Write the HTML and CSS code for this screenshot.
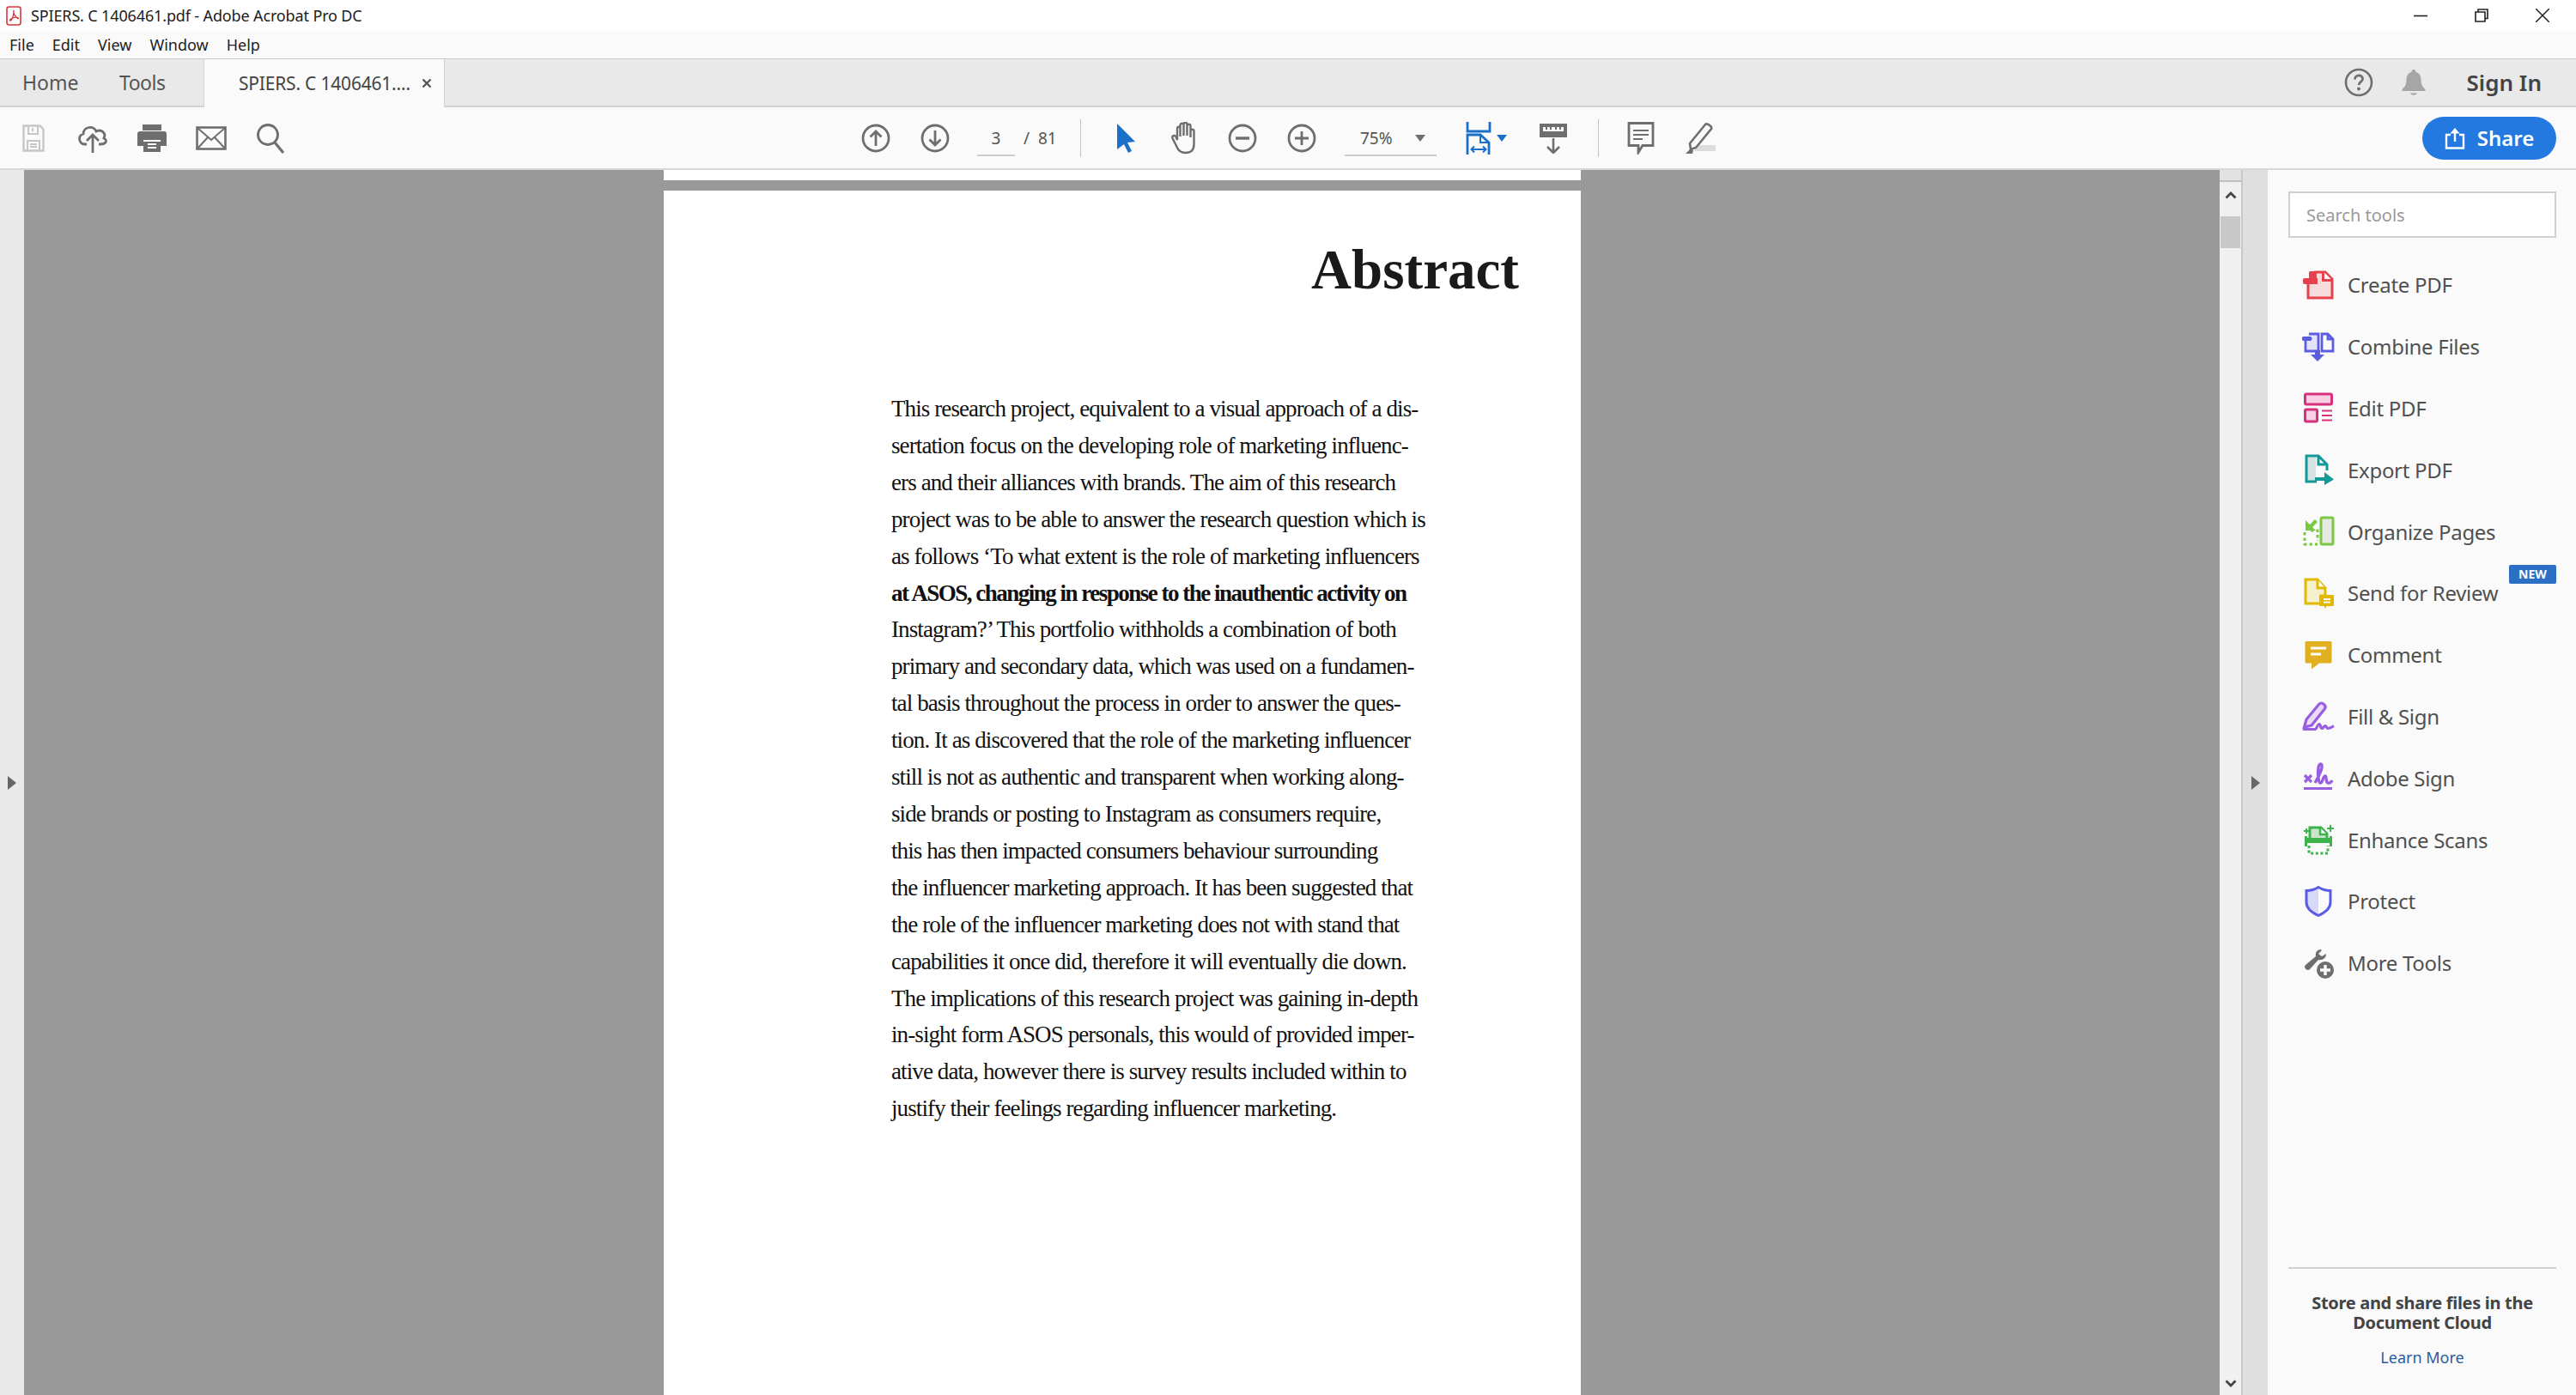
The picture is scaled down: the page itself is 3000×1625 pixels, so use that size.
FILE: index.html
```html
<!DOCTYPE html>
<html lang="en">
<head>
  <meta charset="UTF-8">
  <title>SPIERS. C 1406461.pdf - Adobe Acrobat Pro DC</title>
  <link rel="stylesheet" href="styles.css">
</head>
<body>
  <div class="app">
    <div class="titlebar">
      <svg class="app-icon" width="18" height="23" viewBox="0 0 18 23"><rect x="1" y="1" width="16" height="21" rx="2.5" fill="#fff" stroke="#d9363e" stroke-width="1.6"/><path d="M9 5c-1 3 1 6 4 9 1 1 2 .5 1-.3-2-1-7-.6-9 2-1 1.500 .3 2 1 .8 1.500-2 3-6 3-11z" fill="none" stroke="#d9363e" stroke-width="1.3"/></svg>
      <span class="title-text">SPIERS. C 1406461.pdf - Adobe Acrobat Pro DC</span>
      <div class="win-btns">
        <svg width="16" height="16" viewBox="0 0 16 16"><path d="M0 8.500h16" stroke="#222" stroke-width="1.600"/></svg>
        <svg width="16" height="16" viewBox="0 0 16 16"><path d="M4 3.500V1h11v10.500h-3M1 4h11v11H1z" fill="none" stroke="#222" stroke-width="1.600"/></svg>
        <svg width="16" height="16" viewBox="0 0 16 16"><path d="M0 0l16 16M16 0L0 16" stroke="#222" stroke-width="1.500"/></svg>
      </div>
    </div>

    <div class="menubar">
      <span>File</span><span>Edit</span><span>View</span><span>Window</span><span>Help</span>
    </div>

    <div class="tabbar">
      <div class="tab-link tab-home">Home</div>
      <div class="tab-link tab-tools">Tools</div>
      <div class="tab-doc">
        <span>SPIERS. C 1406461....</span>
        <svg width="12" height="12" viewBox="0 0 12 12"><path d="M1.500 1.500l9 9M10.500 1.500l-9 9" stroke="#555" stroke-width="2.400"/></svg>
      </div>
      <div class="tab-right">
        <svg width="34" height="34" viewBox="0 0 34 34"><circle cx="17" cy="17" r="15" fill="none" stroke="#6e6e6e" stroke-width="2.600"/><path d="M12.500 13.500c0-6 9-6 9-.6 0 3.600-4.400 3.400-4.400 7" fill="none" stroke="#6e6e6e" stroke-width="2.800"/><circle cx="17" cy="24.500" r="1.900" fill="#6e6e6e"/></svg>
        <svg class="bell" width="28" height="32" viewBox="0 0 28 32"><path d="M14 1a2.500 2.500 0 0 1 2.500 3c4.500 1 6 5 6 9 0 6 2 8 5 11v2H.5v-2c3-3 5-5 5-11 0-4 1.500-8 6-9A2.500 2.500 0 0 1 14 1z" fill="#a6a6a6"/><path d="M10 28.500h8c-1 3-7 3-8 0z" fill="#a6a6a6"/></svg>
        <span class="sign-in">Sign In</span>
      </div>
    </div>

    <div class="toolbar">
      <div class="tb-btn"><svg width="26" height="34" viewBox="0 0 26 34"><path d="M1.500 2.500h19l4 4v25h-23z" fill="none" stroke="#c6c6c6" stroke-width="2.400"/><path d="M7 3v9h11V3M12 5v4M6 31v-11h14v11M9 24h8M9 27h8" fill="none" stroke="#c6c6c6" stroke-width="2"/></svg></div>
      <div class="tb-btn"><svg width="36" height="36" viewBox="0 0 36 36"><path d="M11 25H8.500C2 25 0 15 7 13c0-8 12-11 15-3 6-3 12 2 9 8 5 3 2 7-4 7h-2" fill="none" stroke="#6e6e6e" stroke-width="2.800"/><path d="M18 35V15M11 21l7-7 7 7" fill="none" stroke="#6e6e6e" stroke-width="2.800"/></svg></div>
      <div class="tb-btn"><svg width="36" height="36" viewBox="0 0 36 36"><path d="M7 9V2h22v7zM4 10h28a3 3 0 0 1 3 3v14h-7v-7H8v7H1V13a3 3 0 0 1 3-3zM8 22h20v12H8z" fill="#6e6e6e"/><path d="M13 25h10M13 29h10" stroke="#fafafa" stroke-width="2"/></svg></div>
      <div class="tb-btn"><svg width="36" height="28" viewBox="0 0 36 28"><rect x="1.500" y="1.500" width="33" height="25" fill="none" stroke="#6e6e6e" stroke-width="2.600"/><path d="M2 2l16 14L34 2M2 26l12-13M34 26L22 13" fill="none" stroke="#6e6e6e" stroke-width="2"/></svg></div>
      <div class="tb-btn"><svg width="34" height="36" viewBox="0 0 34 36"><circle cx="14" cy="14" r="11.500" fill="none" stroke="#6e6e6e" stroke-width="2.800"/><path d="M22 23l10 12" stroke="#6e6e6e" stroke-width="3.200"/></svg></div>

      <div class="tb-mid">
        <div class="tb-btn"><svg width="34" height="34" viewBox="0 0 34 34"><circle cx="17" cy="17" r="15" fill="none" stroke="#6e6e6e" stroke-width="2.800"/><path d="M17 26V9M10.500 15.500L17 9l6.500 6.500" fill="none" stroke="#6e6e6e" stroke-width="2.800"/></svg></div>
        <div class="tb-btn"><svg width="34" height="34" viewBox="0 0 34 34"><circle cx="17" cy="17" r="15" fill="none" stroke="#6e6e6e" stroke-width="2.800"/><path d="M17 8v17M10.500 18.500L17 25l6.500-6.500" fill="none" stroke="#6e6e6e" stroke-width="2.800"/></svg></div>
        <div class="page-field">3</div>
        <div class="page-total">/&nbsp;&nbsp;81</div>
        <div class="tb-sep sep-one"></div>
        <div class="tb-btn tool-cursor"><svg width="24" height="34" viewBox="0 0 24 34"><path d="M2 0l21 21-9 1 5 10-4 2-5-10-8 6z" fill="#1a6fc9"/></svg></div>
        <div class="tb-btn"><svg width="34" height="38" viewBox="0 0 34 38"><path d="M8 21V8c0-3 3.500-3 3.500 0v9-13c0-3 4-3 4 0v12V3c0-3 4-3 4 0v13V5c0-3 4-3 4 0v13-7c0-3 4-3 4 0v15c0 7-4 10-10 10-5 0-8-2-10-7l-5-10c-1-3 2-4 4-2z" fill="#fafafa" stroke="#6e6e6e" stroke-width="2.400"/></svg></div>
        <div class="tb-btn minus-btn"><svg width="34" height="34" viewBox="0 0 34 34"><circle cx="17" cy="17" r="15" fill="none" stroke="#6e6e6e" stroke-width="2.800"/><path d="M9 17h16" stroke="#6e6e6e" stroke-width="3.400"/></svg></div>
        <div class="tb-btn"><svg width="34" height="34" viewBox="0 0 34 34"><circle cx="17" cy="17" r="15" fill="none" stroke="#6e6e6e" stroke-width="2.800"/><path d="M9 17h16M17 9v16" stroke="#6e6e6e" stroke-width="2.800"/></svg></div>
        <div class="zoom-field"><span>75%</span><i class="caret"></i></div>
        <div class="fit-btn"><svg width="30" height="38" viewBox="0 0 30 38"><path d="M2 0v11h26V0" fill="none" stroke="#1a6fc9" stroke-width="2.800"/><path d="M2 38V15h15l10 9v14" fill="none" stroke="#1a6fc9" stroke-width="2.800"/><path d="M17 15v9h10" fill="none" stroke="#1a6fc9" stroke-width="2"/><path d="M7 32h16M10 28.500L6.500 32l3.500 3.500M20 28.500l3.500 3.500-3.500 3.500" fill="none" stroke="#1a6fc9" stroke-width="2"/></svg><i class="caret caret-blue"></i></div>
        <div class="tb-btn scroll-btn"><svg width="34" height="36" viewBox="0 0 34 36"><path d="M1 1h32v16H1z" fill="#6e6e6e"/><path d="M5 5v5h24V5" fill="#fafafa"/><path d="M9 5v3M14 5v3M20 5v3M25 5v3" stroke="#6e6e6e" stroke-width="2"/><path d="M17 18v17M10 28l7 7 7-7" fill="none" stroke="#6e6e6e" stroke-width="2.600"/></svg></div>
        <div class="tb-sep sep-two"></div>
        <div class="tb-btn comment-btn"><svg width="32" height="38" viewBox="0 0 32 38"><path d="M2 1.500h28v26H18l-5 8v-8H2z" fill="#fafafa" stroke="#6e6e6e" stroke-width="2.800"/><path d="M7 10h18M7 15h18M7 20h11" stroke="#6e6e6e" stroke-width="2.200"/></svg></div>
        <div class="tb-btn pen-btn"><svg width="36" height="38" viewBox="0 0 36 38"><path d="M11 34h25v-7H16z" fill="#dcdcdc"/><path d="M6 25L24 3c2-2 8 2 7 5L13 30l-6 2z" fill="#fafafa" stroke="#6e6e6e" stroke-width="2.600"/><path d="M1 37l5-5 4 1-1 4z" fill="#6e6e6e"/></svg></div>
      </div>

      <div class="share-btn"><svg width="24" height="26" viewBox="0 0 24 26"><path d="M7 9H2v15.500h20V9h-5" fill="none" stroke="#fff" stroke-width="2.400"/><path d="M12 17V3" stroke="#fff" stroke-width="2.400"/><path d="M6.500 7.500L12 1l5.500 6.500z" fill="#fff"/></svg><span>Share</span></div>
    </div>

    <div class="main">
      <div class="rail"><i class="tri-right"></i></div>

      <div class="doc-area">
        <div class="page-stub"></div>
        <div class="page">
          <h1 class="page-title">Abstract</h1>
          <div class="page-body">
            <p>This research project, equivalent to a visual approach of a dis-</p>
            <p>sertation focus on the developing role of marketing influenc-</p>
            <p>ers and their alliances with brands. The aim of this research</p>
            <p>project was to be able to answer the research question which is</p>
            <p>as follows ‘To what extent is the role of marketing influencers</p>
            <p class="strong">at ASOS, changing in response to the inauthentic activity on</p>
            <p>Instagram?’ This portfolio withholds a combination of both</p>
            <p>primary and secondary data, which was used on a fundamen-</p>
            <p>tal basis throughout the process in order to answer the ques-</p>
            <p>tion. It as discovered that the role of the marketing influencer</p>
            <p>still is not as authentic and transparent when working along-</p>
            <p>side brands or posting to Instagram as consumers require,</p>
            <p>this has then impacted consumers behaviour surrounding</p>
            <p>the influencer marketing approach. It has been suggested that</p>
            <p>the role of the influencer marketing does not with stand that</p>
            <p>capabilities it once did, therefore it will eventually die down.</p>
            <p>The implications of this research project was gaining in-depth</p>
            <p>in-sight form ASOS personals, this would of provided imper-</p>
            <p>ative data, however there is survey results included within to</p>
            <p>justify their feelings regarding influencer marketing.</p>
          </div>
        </div>
      </div>

      <div class="scrollbar">
        <div class="sb-cap"></div>
        <svg class="sb-arrow" width="14" height="10" viewBox="0 0 14 10"><path d="M1.500 8.500L7 3l5.500 5.500" fill="none" stroke="#444" stroke-width="2.800"/></svg>
        <div class="sb-thumb"></div>
        <svg class="sb-arrow sb-down" width="14" height="10" viewBox="0 0 14 10"><path d="M1.500 1.500L7 7l5.500-5.500" fill="none" stroke="#444" stroke-width="2.800"/></svg>
      </div>

      <div class="gutter"><i class="tri-right"></i></div>

      <div class="panel">
        <div class="search-box">Search tools</div>
        <div class="tool-list">
          <div class="tool"><svg width="38" height="36" viewBox="0 0 38 36"><path d="M7 14v19h28V11l-8-8H14" fill="#f7dadc" stroke="#e5424d" stroke-width="3"/><path d="M24.500 2v10.500H35" fill="#fafafa" stroke="#e5424d" stroke-width="3"/><path d="M9 2h8v8h1v7H3a2 2 0 0 1-2-2v-3a2 2 0 0 1 2-2h5V3z" fill="#e5424d"/></svg><span>Create PDF</span></div>
          <div class="tool"><svg width="38" height="36" viewBox="0 0 38 36"><path d="M4 8v15h15V3H8" fill="#e2e2f8" stroke="#5c5ce0" stroke-width="2.800"/><path d="M23 23h13V9l-6-6h-7zM30 3v6h6" fill="#fafafa" stroke="#5c5ce0" stroke-width="2.800"/><path d="M2 6h7a2 2 0 0 1 0 5H2a2 2 0 0 1 0-5z" fill="#5c5ce0"/><path d="M15 22h6v5h5l-8 8-8-8h5z" fill="#5c5ce0"/></svg><span>Combine Files</span></div>
          <div class="tool"><svg width="38" height="36" viewBox="0 0 38 36"><rect x="3.500" y="2" width="31" height="12" rx="1.500" fill="#f8cfe3" stroke="#d6317f" stroke-width="3"/><rect x="3.500" y="20" width="14" height="14" rx="1.500" fill="#f8cfe3" stroke="#d6317f" stroke-width="3"/><path d="M23 21.500h12M23 27h12M23 32.500h12" stroke="#d6317f" stroke-width="2"/></svg><span>Edit PDF</span></div>
          <div class="tool"><svg width="38" height="36" viewBox="0 0 38 36"><path d="M5 3h11v29H5z" fill="#d5e4e2"/><path d="M17 32H5V2h14l10 10v7M19 2v10h10" fill="none" stroke="#139a98" stroke-width="3"/><path d="M15 27h11V21l11 8.500L26 36v-5H15z" fill="#139a98"/></svg><span>Export PDF</span></div>
          <div class="tool"><svg width="38" height="36" viewBox="0 0 38 36"><rect x="22" y="2" width="14" height="31" rx="1.500" fill="#e6eae2" stroke="#7ac943" stroke-width="3"/><path d="M3 19v14h15M10 17h8v12" fill="none" stroke="#7ac943" stroke-width="3" stroke-dasharray="3.500 3"/><path d="M4 5v12h12l-4-4 6-6-3-3-6 6z" fill="#7ac943"/></svg><span>Organize Pages</span></div>
          <div class="tool"><svg width="38" height="36" viewBox="0 0 38 36"><path d="M4 2h14l9 10v9h-5v9H4z" fill="#f7f0cc" stroke="#e0b900" stroke-width="3"/><path d="M18 2v10h9" fill="#fafafa" stroke="#e0b900" stroke-width="3"/><path d="M21 20h15a1 1 0 0 1 1 1v11a1 1 0 0 1-1 1h-7l-3 3v-3h-5a1 1 0 0 1-1-1V21a1 1 0 0 1 1-1z" fill="#e0b900"/><path d="M25 25h8M25 28.500h8" stroke="#fafafa" stroke-width="2"/></svg><span>Send for Review</span><b class="badge-new">NEW</b></div>
          <div class="tool"><svg width="38" height="36" viewBox="0 0 38 36"><path d="M5 2h28a1.500 1.500 0 0 1 1.500 1.500V26a1.500 1.500 0 0 1-1.500 1.500H20l-9 7v-7H5A1.500 1.500 0 0 1 3.500 26V3.500A1.500 1.500 0 0 1 5 2z" fill="#e0b020"/><path d="M10 10h18M10 17h12" stroke="#fafafa" stroke-width="3"/></svg><span>Comment</span></div>
          <div class="tool"><svg width="38" height="36" viewBox="0 0 38 36"><path d="M2.500 31l2.500-9L20 4c2.500-3 9 2 6.500 5.500L11 29z" fill="#eadcf8" stroke="#9a5ee0" stroke-width="3.200"/><path d="M1 33.500h14c2 0 3-6 5-6s1 5 3 5 2-3 4-3 1 3 3 3 4-1 7-3" fill="none" stroke="#9a5ee0" stroke-width="3.200"/></svg><span>Fill &amp; Sign</span></div>
          <div class="tool"><svg width="38" height="36" viewBox="0 0 38 36"><path d="M3 15l8 8M11 15l-8 8" stroke="#9a5ee0" stroke-width="3.200"/><path d="M15 24c4-7 7-12 8-18 .5-6-3-5-4 0-1 7 0 17 2 18 3 1 3-8 6-8 2 0 0 7 3 8 2 .5 4-1 5-3" fill="none" stroke="#9a5ee0" stroke-width="3.400"/><path d="M2 30.500h33" stroke="#9a5ee0" stroke-width="3"/></svg><span>Adobe Sign</span></div>
          <div class="tool"><svg width="38" height="36" viewBox="0 0 38 36"><path d="M9 16V4h13l7 7v5" fill="#c9e6cc" stroke="#3cb44b" stroke-width="3"/><path d="M21 4v8h8" fill="#fafafa" stroke="#3cb44b" stroke-width="2.600"/><path d="M3 14h3v2h26v-2h3v12h-3v-4H6v4H3z" fill="#3cb44b"/><path d="M8 25v9h22v-9" fill="none" stroke="#3cb44b" stroke-width="3" stroke-dasharray="3 2.600"/><path d="M33 1v8M29 5h8M5 5v6M2 8h6" stroke="#3cb44b" stroke-width="2"/></svg><span>Enhance Scans</span></div>
          <div class="tool"><svg width="38" height="36" viewBox="0 0 38 36"><path d="M19 2L6 6v13c0 7 6 12 13 15z" fill="#d6d9f7"/><path d="M19 1.500C15 4 10 5.500 5 5.500V19c0 7 6 12 14 15.500 8-3.500 14-8.500 14-15.500V5.500c-5 0-10-1.500-14-4z" fill="none" stroke="#5a5ae6" stroke-width="3"/></svg><span>Protect</span></div>
          <div class="tool"><svg width="38" height="36" viewBox="0 0 38 36"><path d="M22 2c-4 0-7 3-6 8L4 20c-3 3 2 8 5 5l10-11c5 1 9-2 9-7l-5 3-4-3 4-4c-.5 0-1-1-1-1z" fill="#6e6e6e"/><circle cx="27" cy="26" r="10" fill="#6e6e6e"/><path d="M21 26h12M27 20v12" stroke="#fafafa" stroke-width="3.400"/></svg><span>More Tools</span></div>
        </div>
        <div class="cloud-box">
          <strong>Store and share files in the<br>Document Cloud</strong>
          <a>Learn More</a>
        </div>
      </div>
    </div>
  </div>
</body>
</html>
```

FILE: styles.css
```css
html, body {
  margin: 0;
  padding: 0;
}

.app {
  width: 3000px;
  height: 1625px;
  display: flex;
  flex-direction: column;
  overflow: hidden;
  font-family: "Noto Sans", "Open Sans", sans-serif;
  color: #222;
  background-color: #fafafa;
}

.titlebar {
  height: 36px;
  display: flex;
  align-items: center;
  background-color: #fff;
  flex-shrink: 0;
}

.app-icon {
  margin-left: 7px;
}

.title-text {
  margin-left: 11px;
  font-size: 18px;
  letter-spacing: -0.14px;
  color: #1c1c1c;
}

.win-btns {
  margin-left: auto;
  margin-right: 31px;
  display: flex;
  gap: 55px;
}

.menubar {
  height: 32px;
  display: flex;
  align-items: center;
  padding-left: 11px;
  gap: 21px;
  font-size: 18px;
  border-bottom: 1px solid #c8c8c8;
  flex-shrink: 0;
}

.tabbar {
  height: 54px;
  display: flex;
  align-items: stretch;
  background-color: #e9e9e9;
  border-bottom: 2px solid #d2d2d2;
  flex-shrink: 0;
  color: #555;
  font-size: 23px;
}

.tab-link {
  display: flex;
  align-items: center;
  white-space: nowrap;
}

.tab-home {
  margin-left: 26px;
  width: 65px;
}

.tab-tools {
  margin-left: 48px;
  width: 53px;
  letter-spacing: -0.5px;
}

.tab-doc {
  margin-left: 45px;
  width: 281px;
  margin-bottom: -2px;
  display: flex;
  align-items: center;
  box-sizing: border-box;
  padding-left: 40px;
  gap: 13px;
  background-color: #fafafa;
  border-left: 1px solid #d2d2d2;
  border-right: 1px solid #d2d2d2;
  font-size: 21px;
  letter-spacing: -0.2px;
  white-space: nowrap;
  color: #444;
}

.tab-right {
  margin-left: auto;
  display: flex;
  align-items: center;
  padding-right: 40px;
}

.bell {
  margin-left: 33px;
}

.sign-in {
  margin-left: 48px;
  font-size: 26px;
  font-weight: 600;
  color: #444;
}

.toolbar {
  height: 71px;
  display: flex;
  align-items: center;
  padding-left: 4px;
  border-bottom: 2px solid #d8d8d8;
  flex-shrink: 0;
}

.tb-btn {
  width: 69px;
  display: flex;
  justify-content: center;
  align-items: center;
  flex-shrink: 0;
}

.tb-mid {
  margin-left: 636px;
  display: flex;
  align-items: center;
  font-size: 19px;
  color: #555;
}

.page-field {
  width: 44px;
  margin-left: 15px;
  line-height: 38px;
  margin-top: 2px;
  text-align: center;
  border-bottom: 2px solid #ccc;
}

.page-total {
  margin-left: 10px;
  width: 49px;
  white-space: nowrap;
}

.tb-sep {
  width: 1px;
  height: 44px;
  background-color: #c4c4c4;
}

.sep-one {
  margin-left: 17px;
}

.tool-cursor {
  margin-left: 17px;
}

.minus-btn {
  margin-left: -2px;
}

.zoom-field {
  width: 107px;
  margin-left: 16px;
  margin-top: 2px;
  line-height: 38px;
  display: flex;
  align-items: center;
  justify-content: space-between;
  box-sizing: border-box;
  padding: 0 13px 0 18px;
  border-bottom: 2px solid #ccc;
}

.caret {
  display: inline-block;
  width: 0;
  height: 0;
  border-left: 6px solid transparent;
  border-right: 6px solid transparent;
  border-top: 8px solid #6e6e6e;
}

.caret-blue {
  border-top-color: #1a6fc9;
}

.fit-btn {
  width: 54px;
  margin-left: 34px;
  display: flex;
  align-items: center;
  gap: 6px;
}

.scroll-btn {
  margin-left: 13px;
}

.sep-two {
  margin-left: 18px;
}

.comment-btn {
  margin-left: 14px;
}

.pen-btn {
  margin-left: 0;
}

.share-btn {
  margin-left: auto;
  margin-right: 23px;
  width: 156px;
  height: 50px;
  display: flex;
  align-items: center;
  justify-content: center;
  gap: 14px;
  background-color: #2379e0;
  border-radius: 25px;
  color: #fff;
  font-size: 24px;
  font-weight: 600;
}

.main {
  flex: 1;
  display: flex;
  min-height: 0;
}

.rail {
  width: 28px;
  display: flex;
  align-items: center;
  justify-content: center;
  background-color: #e9e9e9;
  flex-shrink: 0;
}

.tri-right {
  display: inline-block;
  width: 0;
  height: 0;
  border-top: 8px solid transparent;
  border-bottom: 8px solid transparent;
  border-left: 10px solid #666;
}

.doc-area {
  flex: 1;
  min-width: 0;
  overflow: hidden;
  background-color: #999;
  padding-left: 745px;
}

.page-stub {
  width: 1068px;
  height: 12px;
  margin-bottom: 12px;
  background-color: #fff;
}

.page {
  width: 1068px;
  height: 1500px;
  background-color: #fff;
  color: #111;
  font-family: "Liberation Serif", serif;
  overflow: hidden;
}

.page-title {
  margin: 54px 72px 0 0;
  text-align: right;
  font-size: 65px;
  line-height: 76px;
  font-weight: 700;
  color: #1a1a1a;
}

.page-body {
  margin: 103px 0 0 265px;
  font-size: 27px;
  line-height: 42.9px;
  letter-spacing: -0.9px;
}

.page-body p {
  margin: 0;
  white-space: nowrap;
}

.page-body .strong {
  font-weight: 700;
  letter-spacing: -1.5px;
}

.scrollbar {
  width: 27px;
  display: flex;
  flex-direction: column;
  align-items: center;
  background-color: #f0f0f0;
  border-right: 2px solid #c8c8c8;
  box-sizing: border-box;
  flex-shrink: 0;
}

.sb-cap {
  width: 100%;
  height: 12px;
  background-color: #e2e2e2;
  border-bottom: 2px solid #c0c0c0;
}

.sb-arrow {
  margin-top: 10px;
}

.sb-thumb {
  width: 23px;
  height: 37px;
  margin-top: 20px;
  background-color: #c8c8c8;
}

.sb-down {
  margin-top: auto;
  margin-bottom: 8px;
}

.gutter {
  width: 29px;
  display: flex;
  align-items: center;
  justify-content: center;
  background-color: #dfdfdf;
  flex-shrink: 0;
}

.panel {
  width: 359px;
  display: flex;
  flex-direction: column;
  box-sizing: border-box;
  padding: 25px 23px 0 24px;
  flex-shrink: 0;
}

.search-box {
  height: 54px;
  box-sizing: border-box;
  padding-left: 19px;
  display: flex;
  align-items: center;
  background-color: #fff;
  border: 2px solid #d0d0d0;
  color: #999;
  font-size: 20px;
}

.tool-list {
  margin-top: 19px;
}

.tool {
  position: relative;
  height: 71.8px;
  display: flex;
  align-items: center;
  gap: 15px;
  margin-left: 16px;
  font-size: 24px;
  letter-spacing: -0.3px;
  color: #505050;
}

.tool svg {
  flex-shrink: 0;
}

.badge-new {
  position: absolute;
  top: 3px;
  right: 0;
  width: 55px;
  line-height: 22px;
  text-align: center;
  border-radius: 2px;
  background-color: #2a6fc4;
  color: #fff;
  font-size: 14px;
  font-weight: 700;
  letter-spacing: 0;
}

.cloud-box {
  margin-top: auto;
  height: 149px;
  box-sizing: border-box;
  padding: 28px 0 0;
  border-top: 2px solid #d0d0d0;
  text-align: center;
  font-size: 20px;
  letter-spacing: -0.3px;
  line-height: 23px;
  color: #444;
}

.cloud-box strong {
  display: block;
}

.cloud-box a {
  display: block;
  margin-top: 18px;
  font-size: 18px;
  letter-spacing: 0;
  color: #2d5c9e;
}
```
